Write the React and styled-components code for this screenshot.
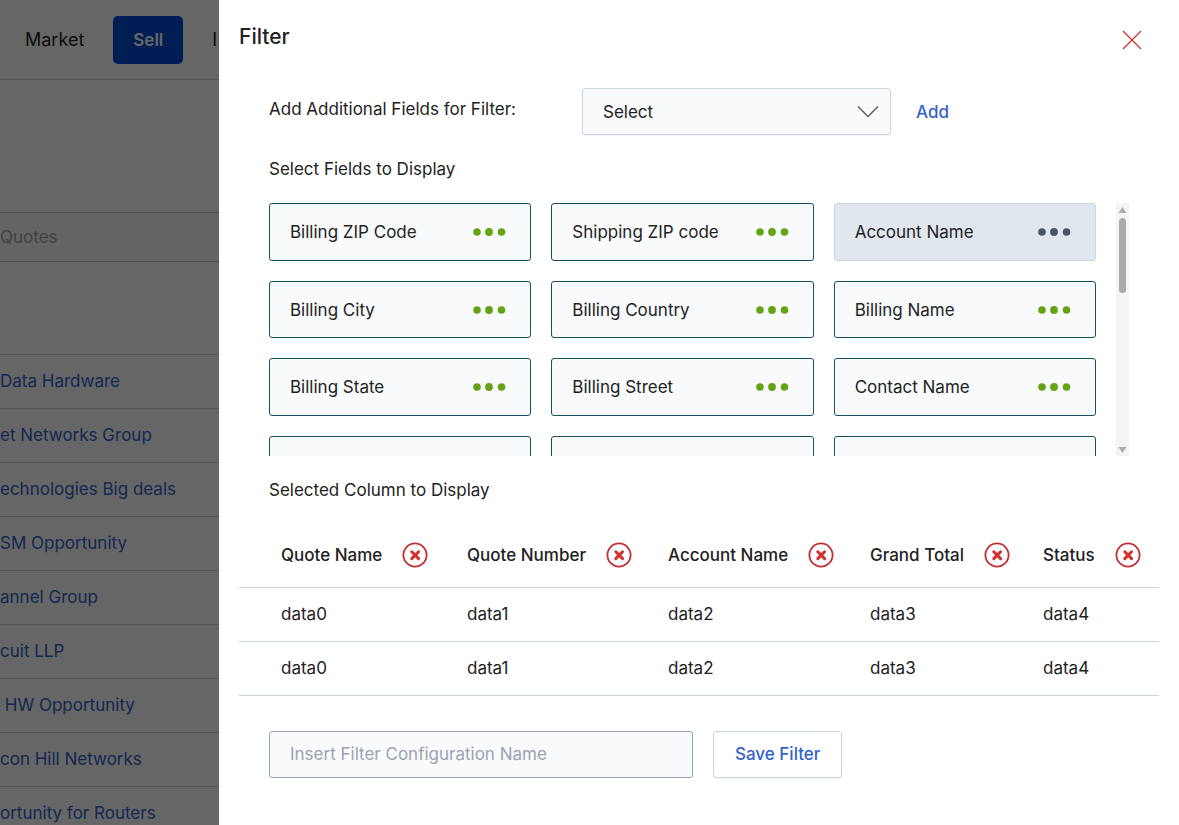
import { useState } from "react";
import styled, { createGlobalStyle } from "styled-components";

const GlobalStyle = createGlobalStyle`
  * {
    box-sizing: border-box;
  }
  body {
    margin: 0;
    overflow: hidden;
    background: #ffffff;
    color: #222222;
    font-family: Inter, "Liberation Sans", sans-serif;
    font-size: 17px;
    line-height: 24px;
  }
  button, input, select {
    font: inherit;
    color: inherit;
  }
`;

const Page = styled.div`
  height: 100vh;
  overflow: hidden;
  white-space: nowrap;
`;

const NavBar = styled.nav`
  display: flex;
  align-items: center;
  gap: 29px;
  height: 80px;
  padding-left: 25px;
  border-bottom: 1px solid #cbd0d6;
`;

const NavLink = styled.a`
  color: #222222;
  font-size: 18px;
  text-decoration: none;
`;

const NavButton = styled.button`
  height: 48px;
  padding: 0 20px;
  border: none;
  border-radius: 5px;
  background: #004bd0;
  color: #ffffff;
  font-weight: 600;
`;

const SearchInput = styled.input`
  display: block;
  width: 100%;
  height: 50px;
  margin-top: 132px;
  padding: 0;
  border: 1px solid #bcc2cc;
  border-width: 1px 0;
  background: #f8fafc;
  &::placeholder {
    color: #a0a4ac;
    opacity: 1;
  }
`;

const QuoteList = styled.ul`
  margin: 92px 0 0;
  padding: 0;
  list-style: none;
`;

const QuoteItem = styled.li`
  height: 54px;
  padding-top: 14px;
  border-top: 1px solid #cbd5d8;
`;

const QuoteLink = styled.a`
  color: #3662cc;
  text-decoration: none;
  white-space: pre;
`;

const Overlay = styled.div`
  position: fixed;
  inset: 0;
  display: flex;
  justify-content: flex-end;
  background: rgba(0, 0, 0, 0.6);
`;

const Drawer = styled.section`
  width: 960px;
  max-width: 100%;
  padding: 0 20px;
  overflow-y: auto;
  scrollbar-width: none;
  background: #ffffff;
`;

const DrawerHeader = styled.header`
  display: flex;
  justify-content: space-between;
  align-items: center;
  height: 80px;
  padding-right: 16px;
`;

const DrawerTitle = styled.h2`
  margin: 0 0 6px;
  font-weight: 500;
  font-size: 21px;
  line-height: 28px;
`;

const CloseButton = styled.button`
  display: flex;
  padding: 0;
  border: none;
  background: none;
`;

const DrawerBody = styled.div`
  padding: 0 30px;
`;

const AddRow = styled.div`
  display: flex;
  align-items: center;
  height: 63px;
`;

const AddLabel = styled.label`
  width: 313px;
  padding-bottom: 6px;
`;

const SelectBox = styled.div`
  position: relative;
  display: flex;
  align-items: center;
  width: 309px;
`;

const FieldSelect = styled.select`
  width: 100%;
  height: 47px;
  padding: 0 50px 0 20px;
  border: 1px solid #cbd5e1;
  border-radius: 3px;
  background: #f8fafc;
  box-shadow: 0 1px 2px rgba(0, 0, 0, 0.05);
  appearance: none;
`;

const Chevron = styled.svg`
  position: absolute;
  right: 12px;
  pointer-events: none;
`;

const AddButton = styled.button`
  margin-left: 25px;
  padding: 0;
  border: none;
  background: none;
  color: #3662cc;
  font-weight: 500;
`;

const SectionTitle = styled.h3`
  margin: 0;
  font-weight: 400;
  font-size: 17px;
  line-height: 24px;
`;

const FieldSection = styled.section`
  padding-top: 14px;
`;

const FieldArea = styled.div`
  display: flex;
  gap: 20px;
  height: 253px;
  margin: 22px 0;
`;

const FieldGrid = styled.div`
  flex: 1;
  display: grid;
  grid-template-columns: repeat(3, 1fr);
  grid-auto-rows: 58px 57px;
  gap: 20px;
  overflow-y: auto;
  scrollbar-width: none;
`;

const FieldCard = styled.button`
  display: flex;
  align-items: center;
  justify-content: space-between;
  padding: 0 24px 0 20px;
  border: 1px solid ${(props) => (props.$used ? "#cbd5e1" : "#164e63")};
  border-radius: 3px;
  background: ${(props) => (props.$used ? "#e0e7ef" : "#f8fafc")};
`;

const ScrollTrack = styled.div`
  display: flex;
  flex-direction: column;
  align-items: center;
  width: 13px;
  padding: 4px 0 3px;
  background: #f4f4f4;
`;

const ScrollThumb = styled.div`
  width: 7px;
  height: 75px;
  margin: 5px 0 auto;
  border-radius: 4px;
  background: #aaaaaa;
`;

const ColumnTable = styled.table`
  width: 100%;
  table-layout: fixed;
  border-collapse: collapse;
  margin-top: 21px;
`;

const Row = styled.tr`
  height: ${(props) => (props.$head ? 64 : 54)}px;
  border-bottom: 1px solid #cbd5d8;
`;

const HeadCell = styled.th`
  padding: 0 0 0 20px;
  font-weight: 500;
  text-align: left;
  white-space: nowrap;
  &:first-child {
    padding-left: 42px;
  }
`;

const HeadContent = styled.div`
  display: flex;
  align-items: center;
  gap: 20px;
`;

const RemoveButton = styled.button`
  display: flex;
  padding: 0;
  border: none;
  background: none;
`;

const Cell = styled.td`
  padding: 0 0 0 20px;
  &:first-child {
    padding-left: 42px;
  }
`;

const SaveRow = styled.form`
  display: flex;
  align-items: center;
  gap: 20px;
  padding: 35px 30px;
`;

const NameInput = styled.input`
  width: 424px;
  height: 47px;
  padding: 0 20px;
  border: 1px solid #94a3b8;
  border-radius: 3px;
  background: #f8fafc;
  &::placeholder {
    color: #9ca3af;
    opacity: 1;
  }
`;

const SaveButton = styled.button`
  height: 47px;
  padding: 0 21px;
  border: 1px solid #cbd5e1;
  border-radius: 3px;
  background: #ffffff;
  box-shadow: 0 1px 2px rgba(0, 0, 0, 0.05);
  color: #3662cc;
  font-weight: 500;
`;

const quotes = [
  "Data Hardware",
  "et Networks Group",
  "echnologies Big deals",
  "SM Opportunity",
  "annel Group",
  "cuit LLP",
  " HW Opportunity",
  "con Hill Networks",
  "ortunity for Routers",
];

const fields = [
  { name: "Billing ZIP Code" },
  { name: "Shipping ZIP code" },
  { name: "Account Name", used: true },
  { name: "Billing City" },
  { name: "Billing Country" },
  { name: "Billing Name" },
  { name: "Billing State" },
  { name: "Billing Street" },
  { name: "Contact Name" },
  { name: "" },
  { name: "" },
  { name: "" },
];

const columns = [
  { name: "Quote Name", width: 208 },
  { name: "Quote Number", width: 201 },
  { name: "Account Name", width: 202 },
  { name: "Grand Total", width: 173 },
  { name: "Status", width: 136 },
];

const Dots = ({ color }) => (
  <svg width="33" height="8" viewBox="0 0 33 8" fill={color}>
    <circle cx="4" cy="4" r="3.8" />
    <circle cx="16" cy="4" r="3.9" />
    <circle cx="28.5" cy="4" r="3.8" />
  </svg>
);

const RemoveIcon = () => (
  <svg width="26" height="26" viewBox="0 0 26 26" fill="none">
    <circle cx="13" cy="13" r="11.6" stroke="#c03035" strokeWidth="1.8" />
    <path
      d="M9.8 9.8l6.8 6.8M16.6 9.8l-6.8 6.8"
      stroke="#d42f2f"
      strokeWidth="3"
      strokeLinecap="round"
    />
  </svg>
);

const App = () => {
  const [filterName, setFilterName] = useState("");

  return (
    <>
      <GlobalStyle />
      <Page>
        <NavBar>
          <NavLink href="#market">Market</NavLink>
          <NavButton type="button">Sell</NavButton>
          <NavLink href="#i">I</NavLink>
        </NavBar>
        <SearchInput placeholder="Quotes" aria-label="Quotes" />
        <QuoteList>
          {quotes.map((quote) => (
            <QuoteItem key={quote}>
              <QuoteLink href="#quote">{quote}</QuoteLink>
            </QuoteItem>
          ))}
        </QuoteList>
      </Page>
      <Overlay>
        <Drawer>
          <DrawerHeader>
            <DrawerTitle>Filter</DrawerTitle>
            <CloseButton type="button" aria-label="Close">
              <svg width="22" height="22" viewBox="0 0 22 22" fill="none">
                <path
                  d="M2 2l18 18M20 2L2 20"
                  stroke="#c8322f"
                  strokeWidth="1.2"
                />
              </svg>
            </CloseButton>
          </DrawerHeader>
          <DrawerBody>
            <AddRow>
              <AddLabel htmlFor="field">Add Additional Fields for Filter:</AddLabel>
              <SelectBox>
                <FieldSelect id="field">
                  <option>Select</option>
                </FieldSelect>
                <Chevron width="22" height="14" viewBox="0 0 22 14" fill="none">
                  <path
                    d="M1 1.5l10 10 10-10"
                    stroke="#5c5f62"
                    strokeWidth="1.5"
                  />
                </Chevron>
              </SelectBox>
              <AddButton type="button">Add</AddButton>
            </AddRow>
            <FieldSection>
              <SectionTitle>Select Fields to Display</SectionTitle>
              <FieldArea>
                <FieldGrid>
                  {fields.map((field, i) => (
                    <FieldCard type="button" key={i} $used={field.used}>
                      {field.name}
                      <Dots color={field.used ? "#475569" : "#65a314"} />
                    </FieldCard>
                  ))}
                </FieldGrid>
                <ScrollTrack>
                  <svg width="9" height="6" viewBox="0 0 9 6" fill="#aaaaaa">
                    <path d="M4.5 0L8.5 6h-8z" />
                  </svg>
                  <ScrollThumb />
                  <svg width="9" height="6" viewBox="0 0 9 6" fill="#aaaaaa">
                    <path d="M4.5 6L8.5 0h-8z" />
                  </svg>
                </ScrollTrack>
              </FieldArea>
            </FieldSection>
            <SectionTitle>Selected Column to Display</SectionTitle>
          </DrawerBody>
          <ColumnTable>
            <colgroup>
              {columns.map((column) => (
                <col key={column.name} width={column.width} />
              ))}
            </colgroup>
            <thead>
              <Row $head>
                {columns.map((column) => (
                  <HeadCell key={column.name}>
                    <HeadContent>
                      {column.name}
                      <RemoveButton
                        type="button"
                        aria-label={`Remove ${column.name}`}
                      >
                        <RemoveIcon />
                      </RemoveButton>
                    </HeadContent>
                  </HeadCell>
                ))}
              </Row>
            </thead>
            <tbody>
              {[0, 1].map((row) => (
                <Row key={row}>
                  {columns.map((column, i) => (
                    <Cell key={column.name}>data{i}</Cell>
                  ))}
                </Row>
              ))}
            </tbody>
          </ColumnTable>
          <SaveRow onSubmit={(e) => e.preventDefault()}>
            <NameInput
              aria-label="Filter configuration name"
              placeholder="Insert Filter Configuration Name"
              value={filterName}
              onChange={(e) => setFilterName(e.target.value)}
            />
            <SaveButton type="submit">Save Filter</SaveButton>
          </SaveRow>
        </Drawer>
      </Overlay>
    </>
  );
};

export default App;
